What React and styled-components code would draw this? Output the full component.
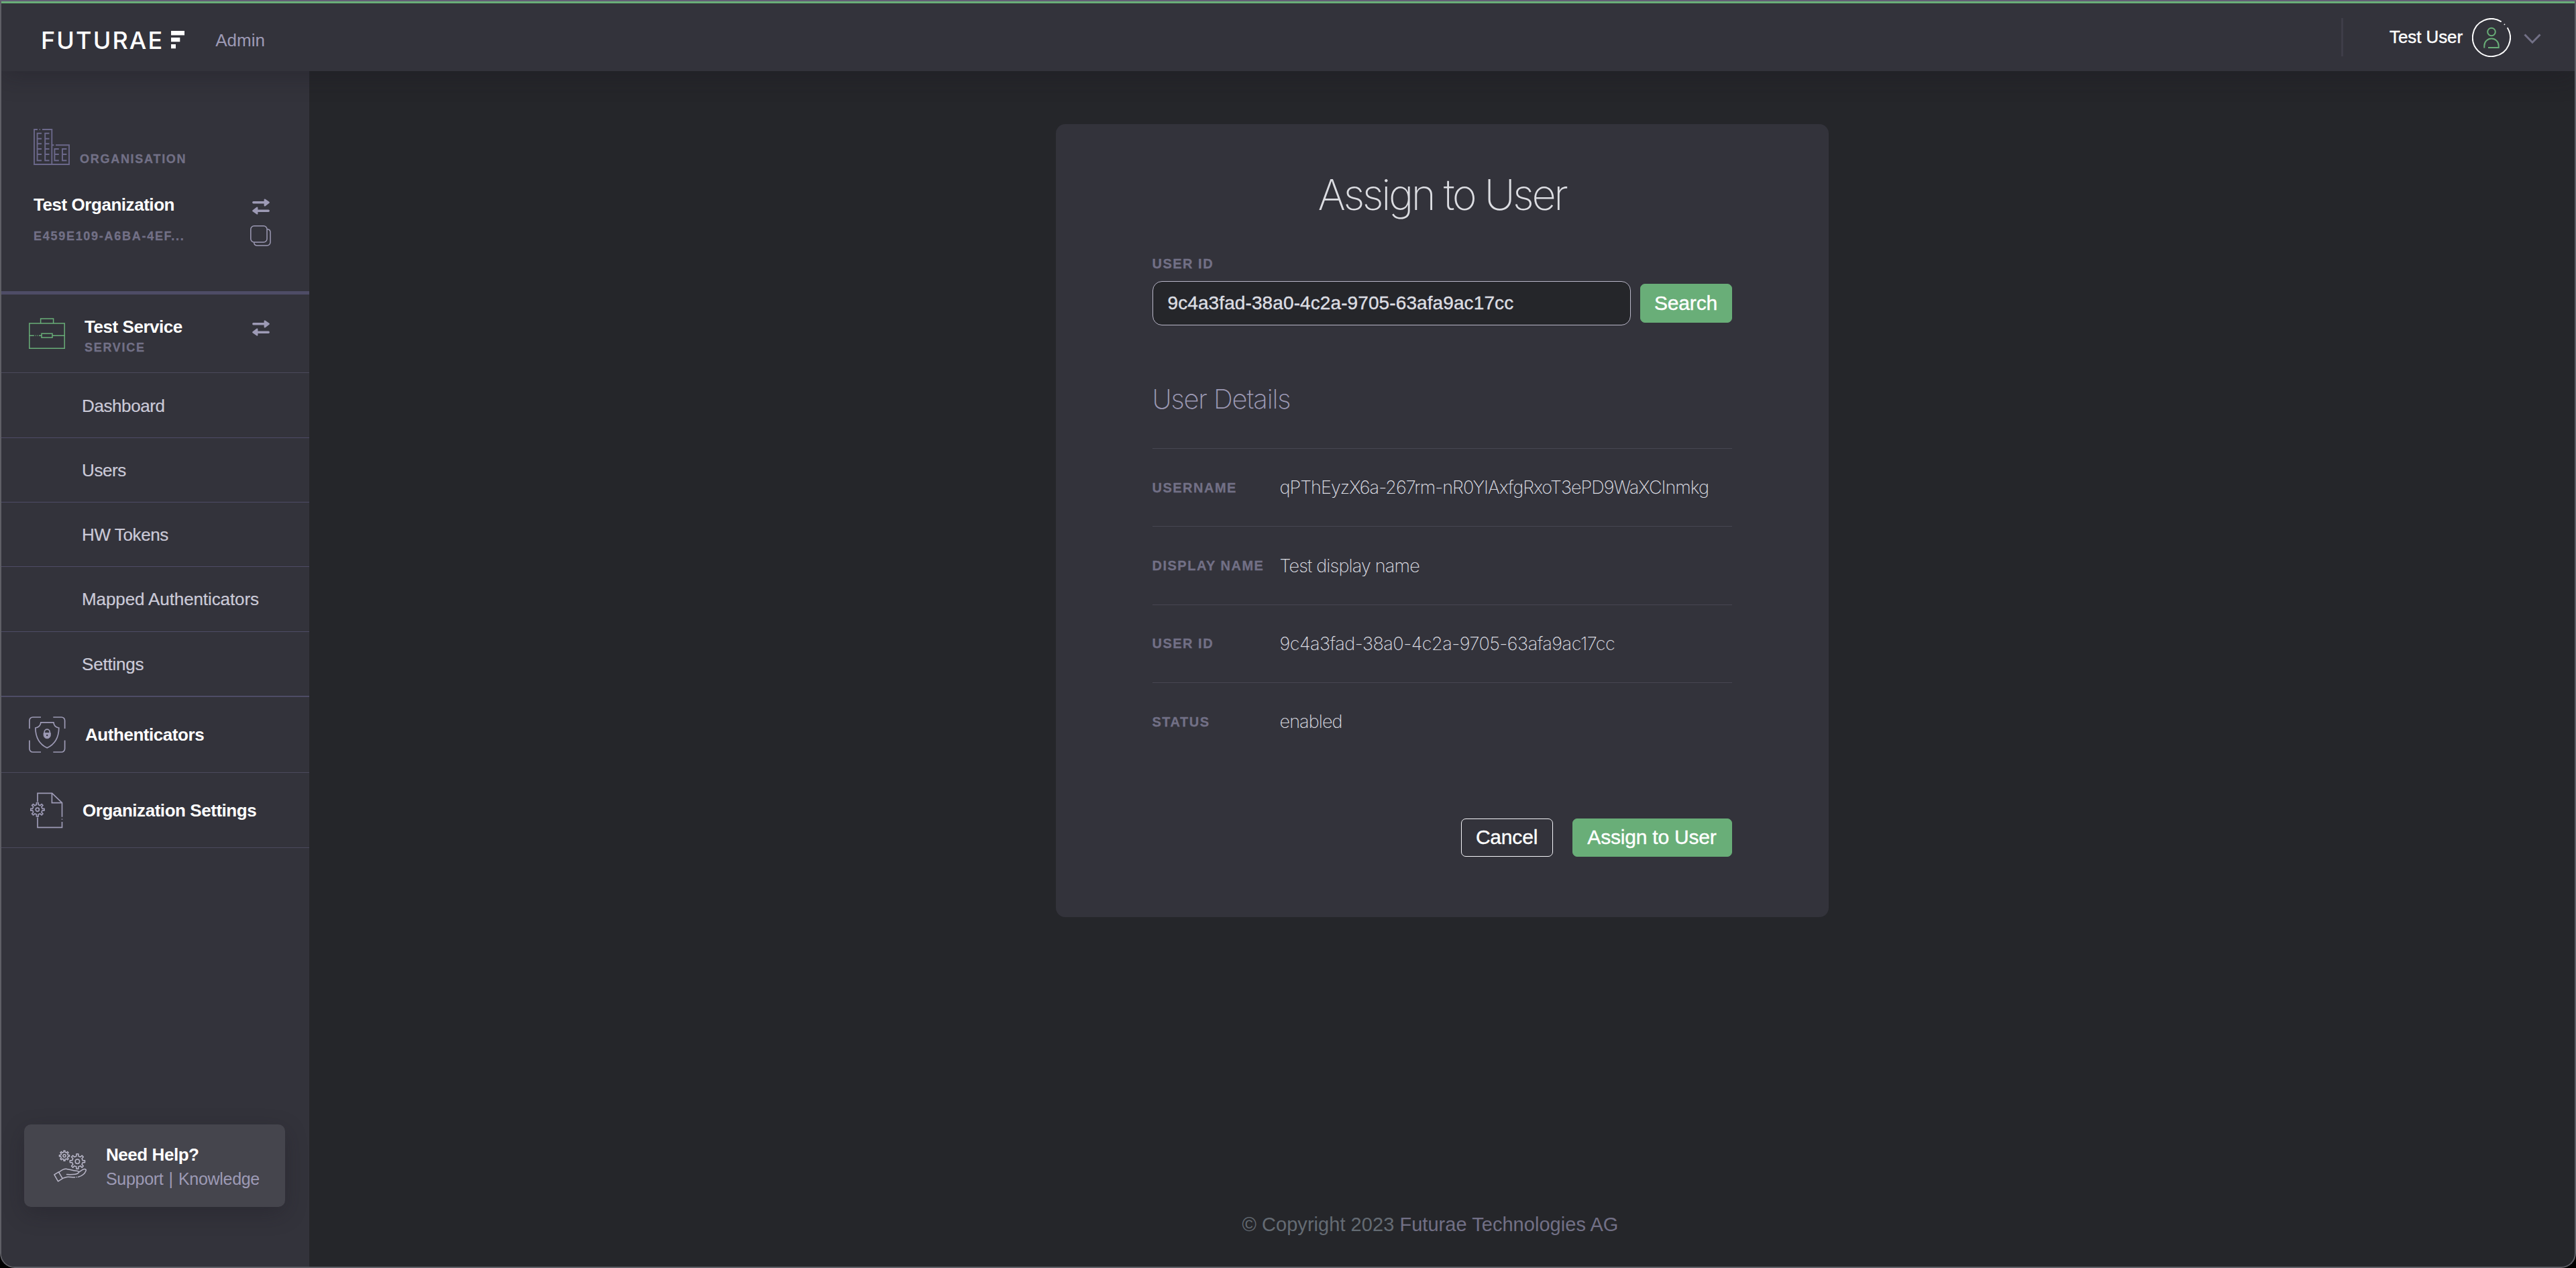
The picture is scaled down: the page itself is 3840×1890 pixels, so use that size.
import React, { useState } from "react";
import styled, { createGlobalStyle } from "styled-components";

const GlobalStyle = createGlobalStyle`
  * {
    box-sizing: border-box;
  }
  body {
    margin: 0;
    background-color: #000;
    font-family: "Liberation Sans", Arial, sans-serif;
    color: #fff;
  }
  svg {
    display: block;
    flex: none;
  }
`;

const Window = styled.div`
  display: flex;
  flex-direction: column;
  height: 100vh;
  overflow: hidden;
  background-color: #25262a;
  border: 2px solid #5f5f66;
  border-top-color: #625f75;
  border-radius: 0 0 22px 22px;
`;

const Header = styled.header`
  position: relative;
  z-index: 2;
  display: flex;
  justify-content: space-between;
  align-items: center;
  flex: none;
  height: 104px;
  padding: 0 50px 0 59px;
  background-color: #33333b;
  border-top: 3px solid #69ae78;
  box-shadow: 0 10px 32px rgba(24, 20, 32, 0.28);
`;

const Brand = styled.div`
  display: flex;
  align-items: center;
  padding-top: 8px;
`;

const BrandName = styled.span`
  margin-right: 11px;
  font-family: Inter, sans-serif;
  font-size: 36px;
  font-weight: 550;
  line-height: 40px;
  letter-spacing: 2.1px;
`;

const BrandArea = styled.span`
  margin-left: 46px;
  font-size: 26px;
  line-height: 40px;
  color: #9d9ab5;
`;

const Account = styled.div`
  display: flex;
  align-items: center;
  height: 57px;
  padding-left: 69px;
  border-left: 3px solid #3e3d48;
`;

const AccountName = styled.span`
  margin-right: 14px;
  font-size: 26px;
  letter-spacing: -0.1px;
  -webkit-text-stroke: 0.4px #fff;
`;

const ChevronBox = styled.span`
  margin: 4px 0 0 19px;
`;

const Body = styled.div`
  display: flex;
  flex: 1;
  min-height: 0;
`;

const Sidebar = styled.aside`
  display: flex;
  flex-direction: column;
  flex: none;
  width: 459px;
  background-color: #33333b;
`;

const Organisation = styled.section`
  height: 333px;
  padding: 86px 57px 0 48px;
  border-bottom: 5px solid #4e4c66;
`;

const OrgHead = styled.div`
  display: flex;
  align-items: flex-end;
  gap: 15px;
`;

const Caption = styled.span`
  font-size: 18px;
  font-weight: 700;
  line-height: ${(props) => props.$line || 18}px;
  letter-spacing: 1.72px;
  text-transform: uppercase;
  color: #727086;
  -webkit-text-stroke: 0.3px #727086;
`;

const OrgRow = styled.div`
  display: flex;
  justify-content: space-between;
  align-items: center;
  height: ${(props) => props.$height}px;
  margin-top: ${(props) => props.$top}px;
`;

const StrongText = styled.span`
  font-size: 26px;
  font-weight: 700;
  line-height: 32px;
  letter-spacing: -0.45px;
`;

const SwapBox = styled.span`
  margin: ${(props) => props.$margin};
`;

const ServiceHead = styled.div`
  display: flex;
  align-items: center;
  height: 117.4px;
  padding: 0 59px 0 41px;
  border-bottom: 1px solid #4b4a5c;
`;

const ServiceText = styled.div`
  display: flex;
  flex-direction: column;
  flex: 1;
  gap: 5px;
  padding-top: 5px;
  margin-left: 29px;
`;

const NavItem = styled.a`
  display: flex;
  align-items: center;
  height: ${(props) => (props.$last ? 97.4 : 96.3)}px;
  padding: 2px 0 0 120px;
  border-bottom: ${(props) => (props.$last ? 2 : 1)}px solid #4e4c66;
  font-size: 26px;
  letter-spacing: ${(props) => props.$tracking}px;
  color: #cbcad8;
  -webkit-text-stroke: 0.2px #cbcad8;
`;

const NavSection = styled.a`
  display: flex;
  align-items: center;
  height: ${(props) => props.$height}px;
  padding: 1px 0 0 41px;
  border-bottom: 1px solid #4b4a5c;
`;

const NavIcon = styled.span`
  width: ${(props) => props.$width}px;
  padding-left: ${(props) => props.$indent || 0}px;
`;

const HelpCard = styled.div`
  display: flex;
  align-items: center;
  gap: 29px;
  width: 389px;
  height: 123px;
  margin: auto 0 89px 34px;
  padding-left: 44px;
  border-radius: 10px;
  background-color: #45454d;
  box-shadow: 0 10px 32px rgba(24, 20, 32, 0.28);
`;

const HelpText = styled.div`
  display: flex;
  flex-direction: column;
  gap: 4px;
  padding-top: 2px;
`;

const HelpLinks = styled.span`
  font-size: 25px;
  line-height: 32px;
  letter-spacing: -0.3px;
  word-spacing: 1.5px;
  color: #9d9ab5;
`;

const Main = styled.main`
  display: flex;
  flex-direction: column;
  align-items: center;
  flex: 1;
  padding-top: 79px;
`;

const Card = styled.form`
  width: 1152px;
  height: 1182px;
  padding: 65px 144px 0;
  border-radius: 14px;
  background-color: #33333b;
`;

const Title = styled.h1`
  margin: 0;
  font-family: Inter, sans-serif;
  font-size: 63px;
  font-weight: 150;
  line-height: 80px;
  letter-spacing: -3.4px;
  text-align: center;
  color: #dcdde2;
`;

const Label = styled.label`
  display: block;
  font-size: 20px;
  font-weight: 700;
  line-height: 24px;
  letter-spacing: 1.5px;
  text-transform: uppercase;
  color: #727086;
  -webkit-text-stroke: 0.3px #727086;
`;

const SearchBlock = styled.div`
  margin-top: 51px;
`;

const SearchRow = styled.div`
  display: flex;
  align-items: center;
  gap: 14px;
  margin-top: 14px;
`;

const Input = styled.input`
  flex: 1;
  min-width: 0;
  height: 66px;
  padding: 0 22px;
  border: 1px solid #b9b7c9;
  border-radius: 14px;
  outline: none;
  background-color: #25262a;
  font-family: "Liberation Sans", Arial, sans-serif;
  font-size: 28px;
  letter-spacing: 0.1px;
  color: #dcdde2;
  -webkit-text-stroke: 0.4px #dcdde2;
`;

const Button = styled.button`
  width: ${(props) => props.$width}px;
  height: ${(props) => props.$height || 57}px;
  padding: 0;
  border: 1px solid ${(props) => (props.$outline ? "#f4f4f8" : "#69ae78")};
  border-radius: 7px;
  background-color: ${(props) => (props.$outline ? "transparent" : "#69ae78")};
  font-family: "Liberation Sans", Arial, sans-serif;
  font-size: 30px;
  letter-spacing: -0.2px;
  color: #fff;
  -webkit-text-stroke: 0.4px #fff;
`;

const Subtitle = styled.h2`
  margin: 85px 0 48px;
  font-family: Inter, sans-serif;
  font-size: 40px;
  font-weight: 200;
  line-height: 50px;
  letter-spacing: -1.15px;
  color: #9d9ab5;
`;

const DetailRow = styled.div`
  display: flex;
  align-items: center;
  height: 116.4px;
  border-top: 1px solid #474651;
`;

const DetailLabel = styled(Label)`
  width: 190px;
  white-space: nowrap;
`;

const DetailValue = styled.span`
  font-family: Inter, sans-serif;
  font-size: 27px;
  font-weight: 200;
  letter-spacing: ${(props) => props.$tracking}px;
  color: #dcdde2;
`;

const Actions = styled.div`
  display: flex;
  justify-content: flex-end;
  gap: 29px;
  margin-top: 86px;
`;

const Footer = styled.footer`
  margin-top: auto;
  padding: 0 35px 46px 0;
  font-size: 29px;
  line-height: 34px;
  letter-spacing: 0.04px;
  color: #646b73;
`;

const Company = styled.span`
  color: #727086;
`;

// outline of a cog wheel with evenly spaced teeth
const gearPath = (cx, cy, outer, inner, teeth) => {
  const step = (Math.PI * 2) / teeth;
  const points = [];
  for (let i = 0; i < teeth; i++) {
    [
      [-0.25, inner],
      [-0.17, outer],
      [0.17, outer],
      [0.25, inner],
    ].forEach(([offset, r]) => {
      const a = (i + offset) * step - Math.PI / 2;
      points.push(
        `${(cx + r * Math.cos(a)).toFixed(2)} ${(cy + r * Math.sin(a)).toFixed(2)}`
      );
    });
  }
  return `M${points.join("L")}Z`;
};

const LogoMark = () => (
  <svg width="20" height="27" viewBox="0 0 20 27" fill="#fff">
    <path d="M0 0H20V6.5H0ZM0 10H13.3V16.3H0ZM0 20H7V26.3H0Z" />
  </svg>
);

const AvatarIcon = () => (
  <svg width="58" height="58" viewBox="-29 -29 58 58" fill="none" strokeWidth="2">
    <path d="M23.7 -14.7A28 28 0 1 1 14.7 -23.7M19 -20l.9 .9" stroke="#fff" />
    <circle cx="0" cy="-8.5" r="5.8" stroke="#69ae78" />
    <path d="M-10.7 15.6V12.2a10.7 10.7 0 0 1 21.4 0V15H-5" stroke="#69ae78" />
  </svg>
);

const ChevronIcon = () => (
  <svg width="26" height="16" viewBox="0 0 26 16" fill="none">
    <path d="M1.5 1.5L13 13.2L24.5 1.5" stroke="#727086" strokeWidth="3" />
  </svg>
);

const BuildingsIcon = () => (
  <svg
    width="54"
    height="54"
    viewBox="0 0 54 54"
    fill="none"
    stroke="#6b688a"
    strokeWidth="1.9"
  >
    <path d="M6 1H1V53H53V24.3H33M30.5 24.3H27.3M8.7 1h1.2M13 1H27.3V53" />
    <path d="M12 6.7H5.6V47.3H12M5.6 14.7H12M5.6 22.3H12M5.6 30H12M5.6 38H12" />
    <path d="M23.5 6.7H17.2V47.3H23.5M17.2 14.7H23.5M17.2 22.3H23.5M17.2 30H23.5M17.2 38H23.5" />
    <path d="M37.8 30H31.4V47.3H37.8M31.4 38H37.8M49.4 30H43V47.3H49.4M43 38H49.4" />
  </svg>
);

const SwapIcon = () => (
  <svg
    width="26"
    height="24"
    viewBox="0 0 26 24"
    fill="#9d9ab5"
    stroke="#9d9ab5"
    strokeLinecap="round"
    strokeLinejoin="round"
  >
    <path d="M1.8 5.8H20M24.2 18.2H6" strokeWidth="3.4" />
    <path d="M18.8 1.6L24.6 5.8L18.8 10.2ZM7.2 13.8L1.4 18.2L7.2 22.4Z" strokeWidth="2.4" />
  </svg>
);

const CopyIcon = () => (
  <svg
    width="31"
    height="31"
    viewBox="0 0 31 31"
    fill="none"
    stroke="#9d9ab5"
    strokeWidth="1.5"
  >
    <rect x="0.8" y="0.8" width="24.2" height="24.2" rx="5" />
    <path d="M25 5.5C28 5.7 30 7.2 30 10.3V25a5 5 0 0 1-5 5H10.5C7.6 30 5.8 28.3 5.6 25.2" />
  </svg>
);

const BriefcaseIcon = () => (
  <svg
    width="54"
    height="47"
    viewBox="0 0 54 47"
    fill="none"
    stroke="#69ae78"
    strokeWidth="1.5"
  >
    <path d="M17.6 8V1H36.6V8M0.8 8H53.2V45.3H0.8Z" />
    <path d="M0.8 26.2H7.8M9.6 26.2h1M12.4 26.2h1M15 26.2H19M35 26.2H53.2" />
    <rect x="19" y="23.2" width="16" height="6" />
  </svg>
);

const ShieldIcon = () => (
  <svg
    width="55"
    height="54"
    viewBox="0 0 55 54"
    fill="none"
    stroke="#9d9ab5"
    strokeWidth="1.7"
  >
    <path d="M0.9 18V6a5 5 0 0 1 5-5H18M36.3 1H48.6a5 5 0 0 1 5 5V18M53.6 35.5V48a5 5 0 0 1-5 5H36.3M18 53H5.9a5 5 0 0 1-5-5V35.5" />
    <path d="M17.9 8.8H36.9C37.3 12.9 40.3 16.1 44.8 17C44.6 30.5 38.5 41.5 27.2 46.8C16 41.5 10 30.5 9.8 17C14.3 16.1 17.4 12.9 17.9 8.8Z" />
    <path d="M23.2 25V23.2a4 4 0 0 1 8 0V25" />
    <path
      d="M22 24.4H32.4V27.6a5.2 5.2 0 0 1-10.4 0Z"
      fill="#9d9ab5"
      strokeWidth="0.8"
    />
    <circle cx="27.2" cy="28" r="1.2" fill="#33333b" stroke="none" />
  </svg>
);

const DocumentIcon = () => (
  <svg
    width="49"
    height="54"
    viewBox="0 0 49 54"
    fill="none"
    stroke="#9d9ab5"
    strokeWidth="1.7"
  >
    <path d="M11 14V1.3H32.6L47.5 15.7V36.8M47.5 39.5v1.2M47.5 44V52.3H11V37.5" />
    <path d="M32.4 1.3V15.7H47.5" />
    <path d={gearPath(10.8, 25.7, 10.3, 7.3, 8)} strokeLinejoin="round" />
    <circle cx="10.8" cy="25.7" r="2.6" />
  </svg>
);

const SupportIcon = () => (
  <svg
    width="49"
    height="48"
    viewBox="0 0 49 48"
    fill="none"
    stroke="#b9b7c9"
    strokeWidth="1.5"
    strokeLinecap="round"
    strokeLinejoin="round"
  >
    <path d={gearPath(16, 8.7, 7.6, 5.4, 8)} />
    <circle cx="16" cy="8.7" r="2" />
    <path d={gearPath(35.4, 17.2, 11.2, 8, 8)} />
    <circle cx="35.4" cy="17.2" r="3.2" />
    <path d="M0.9 36.8L7.4 32.8L13.2 42.6L6.6 46.8Z" />
    <path d="M8.3 33C12 30 15.5 28 19.5 28.4C24 28.9 28 31.2 34.5 31.2C37.4 31.4 38.2 33.4 36.6 34.7C34.5 36.4 29 37 19.5 36.6" />
    <path d="M37.6 33.2L43.6 29.1C46.5 27.8 49 28.6 48 31.2C46.6 35 42.5 38.6 36.8 40.2M34.2 40.6h.3M31.6 40.8C26 40.9 23 39.7 19.4 40.4C17 41 15 41.6 13.2 42.4" />
  </svg>
);

const navItems = [
  { label: "Dashboard", tracking: -0.4 },
  { label: "Users", tracking: -0.4 },
  { label: "HW Tokens", tracking: -0.4 },
  { label: "Mapped Authenticators", tracking: -0.1 },
  { label: "Settings", tracking: -0.2 },
];

const details = [
  {
    label: "Username",
    value: "qPThEyzX6a-267rm-nR0YIAxfgRxoT3ePD9WaXCInmkg",
    tracking: -0.98,
  },
  { label: "Display name", value: "Test display name", tracking: -0.82 },
  {
    label: "User ID",
    value: "9c4a3fad-38a0-4c2a-9705-63afa9ac17cc",
    tracking: -0.5,
  },
  { label: "Status", value: "enabled", tracking: -0.9 },
];

const App = () => {
  const [userId, setUserId] = useState("9c4a3fad-38a0-4c2a-9705-63afa9ac17cc");

  return (
    <Window>
      <GlobalStyle />
      <Header>
        <Brand>
          <BrandName>FUTURAE</BrandName>
          <LogoMark />
          <BrandArea>Admin</BrandArea>
        </Brand>
        <Account>
          <AccountName>Test User</AccountName>
          <AvatarIcon />
          <ChevronBox>
            <ChevronIcon />
          </ChevronBox>
        </Account>
      </Header>

      <Body>
        <Sidebar>
          <Organisation>
            <OrgHead>
              <BuildingsIcon />
              <Caption>Organisation</Caption>
            </OrgHead>
            <OrgRow $height={32} $top={43}>
              <StrongText>Test Organization</StrongText>
              <SwapBox $margin="6px 2px 0 0">
                <SwapIcon />
              </SwapBox>
            </OrgRow>
            <OrgRow $height={31} $top={15}>
              <Caption>E459E109-A6BA-4EF...</Caption>
              <CopyIcon />
            </OrgRow>
          </Organisation>

          <ServiceHead>
            <BriefcaseIcon />
            <ServiceText>
              <StrongText>Test Service</StrongText>
              <Caption $line={20}>Service</Caption>
            </ServiceText>
            <SwapBox $margin="0 0 17px">
              <SwapIcon />
            </SwapBox>
          </ServiceHead>
          {navItems.map((item, index) => (
            <NavItem
              key={item.label}
              $tracking={item.tracking}
              $last={index === navItems.length - 1}
            >
              {item.label}
            </NavItem>
          ))}
          <NavSection $height={113}>
            <NavIcon $width={84}>
              <ShieldIcon />
            </NavIcon>
            <StrongText>Authenticators</StrongText>
          </NavSection>
          <NavSection $height={112}>
            <NavIcon $width={80} $indent={2}>
              <DocumentIcon />
            </NavIcon>
            <StrongText>Organization Settings</StrongText>
          </NavSection>

          <HelpCard>
            <SupportIcon />
            <HelpText>
              <StrongText>Need Help?</StrongText>
              <HelpLinks>Support | Knowledge</HelpLinks>
            </HelpText>
          </HelpCard>
        </Sidebar>

        <Main>
          <Card onSubmit={(e) => e.preventDefault()}>
            <Title>Assign to User</Title>
            <SearchBlock>
              <Label htmlFor="userId">User ID</Label>
              <SearchRow>
                <Input
                  id="userId"
                  value={userId}
                  onChange={(e) => setUserId(e.target.value)}
                />
                <Button type="submit" $width={137} $height={58}>
                  Search
                </Button>
              </SearchRow>
            </SearchBlock>

            <Subtitle>User Details</Subtitle>
            {details.map((row) => (
              <DetailRow key={row.label}>
                <DetailLabel as="span">{row.label}</DetailLabel>
                <DetailValue $tracking={row.tracking}>{row.value}</DetailValue>
              </DetailRow>
            ))}

            <Actions>
              <Button type="button" $width={137} $outline>
                Cancel
              </Button>
              <Button type="button" $width={238}>
                Assign to User
              </Button>
            </Actions>
          </Card>
          <Footer>
            © Copyright 2023 <Company>Futurae Technologies AG</Company>
          </Footer>
        </Main>
      </Body>
    </Window>
  );
};

export default App;
